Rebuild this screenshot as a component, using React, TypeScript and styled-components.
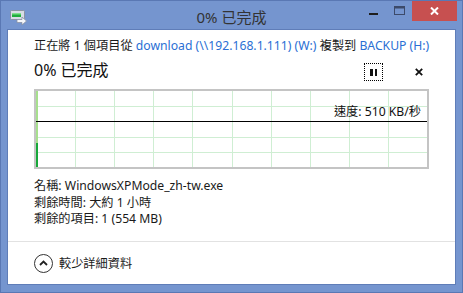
import React from "react";
import styled, { createGlobalStyle } from "styled-components";

const Global = createGlobalStyle`
  html, body { margin: 0; padding: 0; background: #7595cf; }
  body { font-family: "Segoe UI", "Noto Sans", "Noto Sans CJK TC", sans-serif; }
  * { box-sizing: border-box; }
`;

const Win = styled.div`
  width: 463px;
  height: 293px;
  background: #7595cf;
  border: 1px solid #5a78b4;
  display: flex;
  flex-direction: column;
  padding: 0 6px 7px 6px;
`;

const TitleBar = styled.div`
  height: 28px;
  display: flex;
  align-items: flex-start;
  position: relative;
`;

const AppIcon = styled.div`
  width: 18px;
  height: 16px;
  margin: 7px 0 0 3px;
`;

const Title = styled.div`
  position: absolute;
  left: 0;
  right: 0;
  top: 5px;
  text-align: center;
  font-size: 15px;
  color: #333;
  pointer-events: none;
`;

const Controls = styled.div`
  margin-left: auto;
  display: flex;
  align-items: flex-start;
  margin-right: -1px;
`;

const CtlBtn = styled.div<{ $w: number; $bg?: string }>`
  width: ${(p) => p.$w}px;
  height: 20px;
  background: ${(p) => p.$bg || "transparent"};
  display: flex;
  align-items: center;
  justify-content: center;
`;

const Client = styled.div`
  flex: 1;
  background: #fff;
  border: 1px solid #5f7db8;
  display: flex;
  flex-direction: column;
`;

const Body = styled.div`
  padding: 8px 26px 0 26px;
  display: flex;
  flex-direction: column;
  font-size: 12.2px;
  color: #1a1a1a;
`;

const Line = styled.div`
  height: 16px;
  line-height: 16px;
  white-space: nowrap;
`;

const Link = styled.span`
  color: #2a6fd4;
`;

const HeadRow = styled.div`
  display: flex;
  align-items: flex-start;
  height: 32px;
  margin-top: 1px;
`;

const Big = styled.div`
  font-size: 16px;
  line-height: 22px;
  margin-top: 4px;
  color: #111;
`;

const Pause = styled.div`
  margin-left: auto;
  margin-top: 8px;
  width: 19px;
  height: 18px;
  border: 1px dotted #000;
  display: flex;
  align-items: center;
  justify-content: center;
  gap: 2px;
`;

const Bar = styled.span`
  width: 2.5px;
  height: 7px;
  background: #111;
`;

const Cancel = styled.div`
  width: 10px;
  height: 10px;
  margin-top: 12px;
  margin-left: 31px;
  margin-right: 5px;
  display: flex;
  align-items: center;
  justify-content: center;
`;

const Chart = styled.div`
  position: relative;
  width: 395px;
  height: 80px;
  border: 2px solid #c4c4c4;
  margin-top: 2px;
`;

const Speed = styled.div`
  position: absolute;
  right: 6px;
  top: 13px;
  font-size: 12.2px;
  line-height: 16px;
  color: #111;
`;

const Info = styled.div`
  margin-top: 9px;
  display: flex;
  flex-direction: column;
`;

const InfoLine = styled(Line)`
  height: 16.5px;
  line-height: 16.5px;
`;

const Sep = styled.div`
  margin-top: auto;
  height: 1px;
  background: #e2e2e2;
`;

const Footer = styled.div`
  height: 42px;
  display: flex;
  align-items: center;
  padding-left: 26px;
  gap: 6px;
  font-size: 12.2px;
  color: #1a1a1a;
`;

const Circle = styled.div`
  width: 19px;
  height: 19px;
  border: 1.5px solid #333;
  border-radius: 50%;
  display: flex;
  align-items: center;
  justify-content: center;
`;

const ChartSvg = () => {
  const W = 391;
  const H = 76;
  const cols = 10;
  const rows = 5;
  const cw = W / cols;
  const rh = H / rows;
  const lines: React.ReactNode[] = [];
  for (let i = 1; i < cols; i++) {
    const x = Math.round(i * cw) + 0.5;
    lines.push(<line key={"v" + i} x1={x} y1={0} x2={x} y2={H} stroke="#cfeed3" strokeWidth={1} />);
  }
  for (let j = 1; j < rows; j++) {
    const y = Math.round(j * rh) + 0.5;
    lines.push(<line key={"h" + j} x1={0} y1={y} x2={W} y2={y} stroke="#cfeed3" strokeWidth={1} />);
  }
  return (
    <svg width={W} height={H} style={{ display: "block" }}>
      {lines}
      <rect x={0} y={0} width={2} height={52} fill="#a7e08d" />
      <rect x={0} y={52} width={2} height={24} fill="#17a83a" />
      <line x1={0} y1={30.5} x2={W} y2={30.5} stroke="#000" strokeWidth={1} />
    </svg>
  );
};

export default function App() {
  return (
    <>
      <Global />
      <Win>
        <TitleBar>
          <AppIcon>
            <svg width="18" height="16" viewBox="0 0 18 16">
              <rect x="0.5" y="1.5" width="14" height="9" rx="1" fill="#d8dde6" stroke="#8a93a3" />
              <rect x="2" y="4" width="9" height="4" fill="#1fae3c" />
              <rect x="2" y="4" width="9" height="1.5" fill="#7fe08a" />
              <path d="M7 10.5h5v-2.5l4.5 4-4.5 4v-2.5h-5z" fill="#f4f6fa" stroke="#8a93a3" strokeWidth="0.8" />
            </svg>
          </AppIcon>
          <Title>0% 已完成</Title>
          <Controls>
            <CtlBtn $w={26}>
              <svg width="9" height="3" style={{ marginTop: 7 }}>
                <rect x="0" y="0" width="9" height="2" fill="#1e1e1e" />
              </svg>
            </CtlBtn>
            <CtlBtn $w={26}>
              <svg width="11" height="9" style={{ marginTop: -2 }}>
                <rect x="0.5" y="0.5" width="10" height="8" fill="none" stroke="#3c4a6a" />
                <rect x="0.5" y="0.5" width="10" height="2" fill="#3c4a6a" />
              </svg>
            </CtlBtn>
            <CtlBtn $w={45} $bg="#c75050">
              <svg width="9" height="8" viewBox="0 0 9 8">
                <path d="M1 0.5 L8 7.5 M8 0.5 L1 7.5" stroke="#fff" strokeWidth="2" />
              </svg>
            </CtlBtn>
          </Controls>
        </TitleBar>
        <Client>
          <Body>
            <Line>
              正在將 1 個項目從 <Link>download (\\192.168.1.111) (W:)</Link> 複製到 <Link>BACKUP (H:)</Link>
            </Line>
            <HeadRow>
              <Big>0% 已完成</Big>
              <Pause>
                <Bar />
                <Bar />
              </Pause>
              <Cancel>
                <svg width="8" height="8" viewBox="0 0 8 8">
                  <path d="M0.8 0.8 L7.2 7.2 M7.2 0.8 L0.8 7.2" stroke="#111" strokeWidth="1.8" />
                </svg>
              </Cancel>
            </HeadRow>
            <Chart>
              <ChartSvg />
              <Speed>速度: 510 KB/秒</Speed>
            </Chart>
            <Info>
              <InfoLine>名稱: WindowsXPMode_zh-tw.exe</InfoLine>
              <InfoLine>剩餘時間: 大約 1 小時</InfoLine>
              <InfoLine>剩餘的項目: 1 (554 MB)</InfoLine>
            </Info>
          </Body>
          <Sep />
          <Footer>
            <Circle>
              <svg width="9" height="6" viewBox="0 0 9 6">
                <path d="M1 5 L4.5 1.5 L8 5" fill="none" stroke="#222" strokeWidth="1.8" />
              </svg>
            </Circle>
            較少詳細資料
          </Footer>
        </Client>
      </Win>
    </>
  );
}
